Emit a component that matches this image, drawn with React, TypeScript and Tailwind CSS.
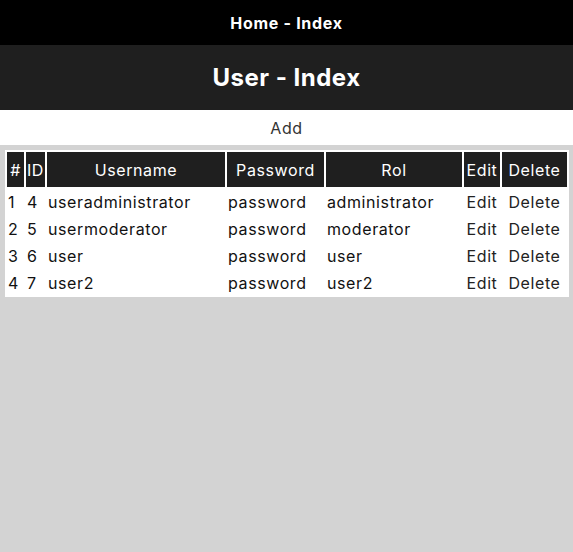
const users = [
  { id: 4, username: 'useradministrator', password: 'password', rol: 'administrator' },
  { id: 5, username: 'usermoderator', password: 'password', rol: 'moderator' },
  { id: 6, username: 'user', password: 'password', rol: 'user' },
  { id: 7, username: 'user2', password: 'password', rol: 'user2' },
];

export default function App() {
  return (
    <div className="min-h-[552px] bg-[#d3d3d3] font-['Inter',sans-serif] text-[16px] tracking-[0.6px] text-[#111]">
      <header className="flex h-[45px] items-center justify-center bg-black">
        <a className="text-[16px] font-bold tracking-[0.7px] text-white">Home - Index</a>
      </header>
      <div className="flex h-[65px] items-center justify-center bg-[#1f1f1f]">
        <h1 className="text-[24px] font-bold tracking-[0.5px] text-white">User - Index</h1>
      </div>
      <div className="flex h-[35px] items-center justify-center bg-white">
        <a className="text-[16px] text-[#333]">Add</a>
      </div>
      <div className="pl-[5px] pr-[4px] pt-[5px]">
        <table className="w-full table-fixed border-separate border-spacing-[2px] bg-white">
          <thead>
            <tr className="h-[35px] bg-[#1f1f1f] text-white">
              <th className="w-[17px] p-0 font-normal">#</th>
              <th className="w-[19px] p-0 font-normal">ID</th>
              <th className="w-[178px] p-0 font-normal">Username</th>
              <th className="w-[97px] p-0 font-normal">Password</th>
              <th className="w-[136px] p-0 font-normal">Rol</th>
              <th className="w-[36px] p-0 font-normal">Edit</th>
              <th className="w-[65px] p-0 font-normal">Delete</th>
            </tr>
          </thead>
          <tbody>
            {users.map((u, i) => (
              <tr key={u.id} className="h-[25px]">
                <td className="px-[1px] py-0">{i + 1}</td>
                <td className="px-[1px] py-0">{u.id}</td>
                <td className="px-[1px] py-0">{u.username}</td>
                <td className="px-[1px] py-0">{u.password}</td>
                <td className="px-[1px] py-0">{u.rol}</td>
                <td className="p-0 text-center text-[#222]">
                  <a>Edit</a>
                </td>
                <td className="p-0 text-center text-[#222]">
                  <a>Delete</a>
                </td>
              </tr>
            ))}
          </tbody>
        </table>
      </div>
    </div>
  );
}
